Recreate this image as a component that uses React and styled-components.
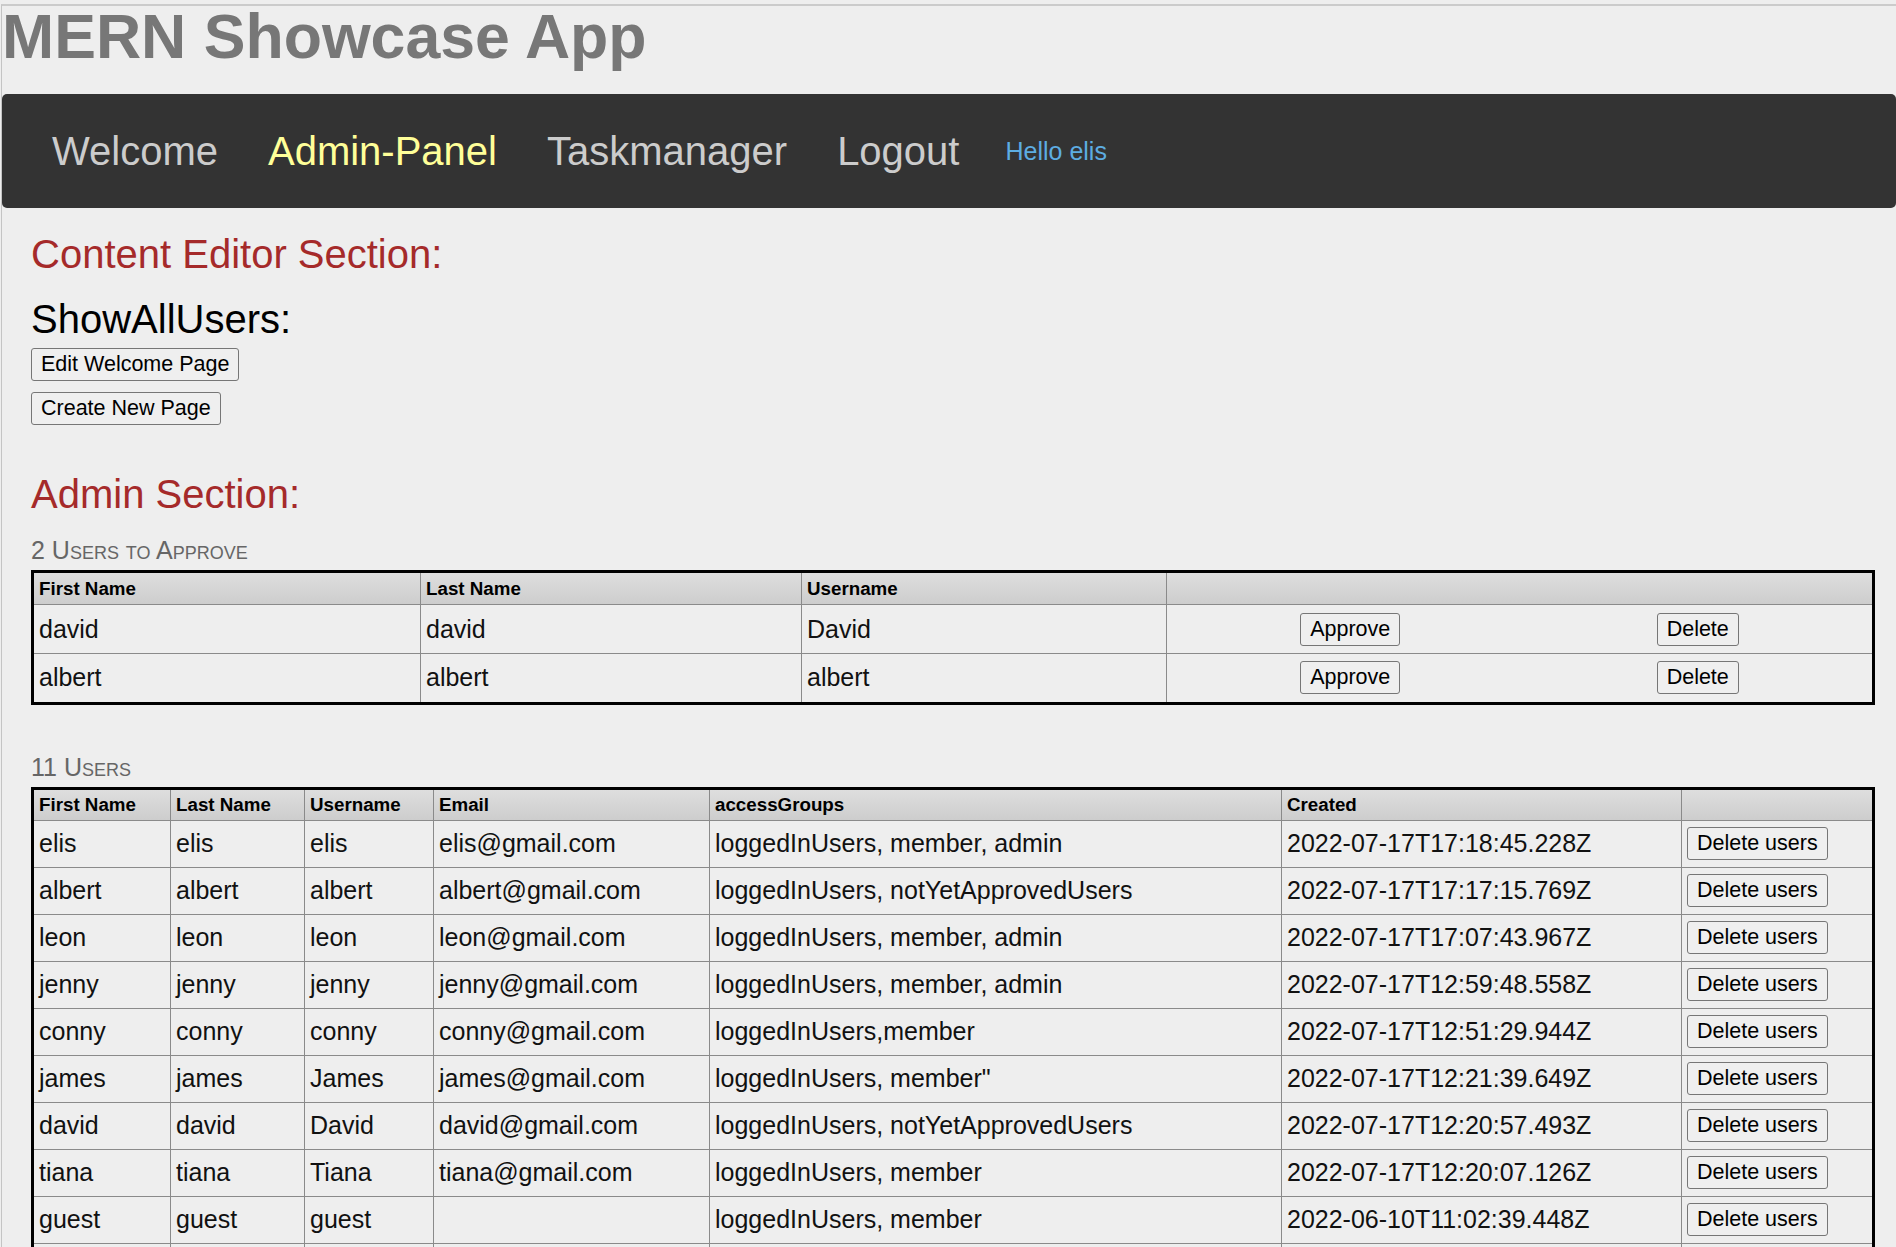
import React from "react";
import styled, { createGlobalStyle } from "styled-components";

const GlobalStyle = createGlobalStyle`
  * {
    box-sizing: border-box;
  }
  html,
  body {
    margin: 0;
    background: #eeeeee;
  }
  body {
    padding: 4px 0 0 1px;
    font-family: "Liberation Sans", Arial, sans-serif;
  }
  #root {
    min-height: calc(100vh - 4px);
    border-top: 2px solid #cbcbcb;
    border-left: 1px solid #c4c4c4;
  }
`;

const approveList = [
  { first: "david", last: "david", username: "David" },
  { first: "albert", last: "albert", username: "albert" },
];

const users = [
  ["elis", "elis", "elis", "elis@gmail.com", "loggedInUsers, member, admin", "2022-07-17T17:18:45.228Z"],
  ["albert", "albert", "albert", "albert@gmail.com", "loggedInUsers, notYetApprovedUsers", "2022-07-17T17:17:15.769Z"],
  ["leon", "leon", "leon", "leon@gmail.com", "loggedInUsers, member, admin", "2022-07-17T17:07:43.967Z"],
  ["jenny", "jenny", "jenny", "jenny@gmail.com", "loggedInUsers, member, admin", "2022-07-17T12:59:48.558Z"],
  ["conny", "conny", "conny", "conny@gmail.com", "loggedInUsers,member", "2022-07-17T12:51:29.944Z"],
  ["james", "james", "James", "james@gmail.com", 'loggedInUsers, member"', "2022-07-17T12:21:39.649Z"],
  ["david", "david", "David", "david@gmail.com", "loggedInUsers, notYetApprovedUsers", "2022-07-17T12:20:57.493Z"],
  ["tiana", "tiana", "Tiana", "tiana@gmail.com", "loggedInUsers, member", "2022-07-17T12:20:07.126Z"],
  ["guest", "guest", "guest", "", "loggedInUsers, member", "2022-06-10T11:02:39.448Z"],
  ["admin", "admin", "admin", "admin@gmail.com", "loggedInUsers, member, admin", "2022-06-10T10:58:12.311Z"],
  ["test", "test", "test", "test@gmail.com", "loggedInUsers, member", "2022-06-10T10:41:05.092Z"],
];

const userColumns = [
  { name: "First Name", w: 137 },
  { name: "Last Name", w: 134 },
  { name: "Username", w: 129 },
  { name: "Email", w: 276 },
  { name: "accessGroups", w: 572 },
  { name: "Created", w: 400 },
  { name: "", w: null },
];

const App = () => {
  return (
    <>
      <GlobalStyle />
      <Title>MERN Showcase App</Title>
      <NavBar>
        <NavLink href="#">Welcome</NavLink>
        <NavLink href="#" $active>
          Admin-Panel
        </NavLink>
        <NavLink href="#">Taskmanager</NavLink>
        <NavLink href="#">Logout</NavLink>
        <Greeting>Hello elis</Greeting>
      </NavBar>

      <Main>
        <SectionTitle $top={22.8}>Content Editor Section:</SectionTitle>
        <SubTitle>ShowAllUsers:</SubTitle>
        <ButtonStack>
          <Button>Edit Welcome Page</Button>
          <Button>Create New Page</Button>
        </ButtonStack>

        <SectionTitle $top={45.3}>Admin Section:</SectionTitle>
        <Caption $top={19.5}>2 Users to Approve</Caption>
        <Table>
          <thead>
            <tr>
              <HeadCell $w={387} $pad={4.6}>First Name</HeadCell>
              <HeadCell $w={381} $pad={4.6}>Last Name</HeadCell>
              <HeadCell $w={365} $pad={4.6}>Username</HeadCell>
              <HeadCell $pad={4.6} />
            </tr>
          </thead>
          <tbody>
            {approveList.map((u) => (
              <tr key={u.first}>
                <Cell $pad={7.3}>{u.first}</Cell>
                <Cell $pad={7.3}>{u.last}</Cell>
                <Cell $pad={7.3}>{u.username}</Cell>
                <Cell $pad={7.3}>
                  <ActionRow>
                    <Button>Approve</Button>
                    <Button>Delete</Button>
                  </ActionRow>
                </Cell>
              </tr>
            ))}
          </tbody>
        </Table>

        <Caption $top={48.5}>11 Users</Caption>
        <Table>
          <thead>
            <tr>
              {userColumns.map((c, i) => (
                <HeadCell key={i} $w={c.w} $pad={3.8}>
                  {c.name}
                </HeadCell>
              ))}
            </tr>
          </thead>
          <tbody>
            {users.map((u, i) => (
              <tr key={i}>
                {u.map((v, j) => (
                  <Cell key={j} $pad={6.5}>
                    {v}
                  </Cell>
                ))}
                <Cell $pad={6.5}>
                  <Button>Delete users</Button>
                </Cell>
              </tr>
            ))}
          </tbody>
        </Table>
      </Main>
    </>
  );
};

export default App;

const Title = styled.h1`
  margin: 0 0 27px;
  font-size: 62.6px;
  line-height: 61px;
  font-weight: 700;
  color: #777777;
`;

const NavBar = styled.nav`
  display: flex;
  align-items: center;
  gap: 50px;
  height: 114px;
  padding-left: 50px;
  background: #333333;
  border-radius: 5px;
`;

const NavLink = styled.a`
  font-size: 40px;
  color: ${(p) => (p.$active ? "#ffff99" : "#cccccc")};
  text-decoration: none;
  white-space: nowrap;
`;

const Greeting = styled.span`
  margin-left: -4px;
  font-size: 25px;
  color: #5dade2;
`;

const Main = styled.main`
  padding: 0 21px 40px 29px;
`;

const SectionTitle = styled.h2`
  margin: ${(p) => p.$top}px 0 0;
  font-size: 40px;
  line-height: 46px;
  font-weight: 400;
  color: #a52a2a;
`;

const SubTitle = styled.h3`
  margin: 19px 0 0;
  font-size: 40px;
  line-height: 46px;
  font-weight: 400;
  color: #000000;
`;

const ButtonStack = styled.div`
  display: flex;
  flex-direction: column;
  align-items: flex-start;
  gap: 11.5px;
  margin-top: 6.2px;
`;

const Button = styled.button`
  padding: 3px 9px;
  font-family: "Liberation Sans", Arial, sans-serif;
  font-size: 21.5px;
  line-height: normal;
  color: #000000;
  background: #efefef;
  border: 1px solid #767676;
  border-radius: 3px;
  cursor: pointer;
`;

const Caption = styled.h4`
  margin: ${(p) => p.$top}px 0 5px;
  font-size: 25px;
  line-height: normal;
  font-weight: 400;
  font-variant: small-caps;
  color: #666666;
`;

const Table = styled.table`
  width: 100%;
  table-layout: fixed;
  border-collapse: separate;
  border-spacing: 0;
  border: 3px solid #000000;

  tr > *:last-child {
    border-right: none;
  }
  tbody tr:last-child td {
    border-bottom: none;
  }
`;

const HeadCell = styled.th`
  width: ${(p) => (p.$w ? `${p.$w}px` : "auto")};
  padding: ${(p) => p.$pad}px 5px;
  font-size: 18.75px;
  line-height: normal;
  font-weight: 700;
  text-align: left;
  color: #000000;
  background: linear-gradient(#dedede, #cdcdcd);
  border-right: 1px solid #8a8a8a;
  border-bottom: 1px solid #8a8a8a;
`;

const Cell = styled.td`
  padding: ${(p) => p.$pad}px 5px;
  font-size: 25px;
  line-height: normal;
  color: #111111;
  white-space: nowrap;
  overflow: hidden;
  border-right: 1px solid #8a8a8a;
  border-bottom: 1px solid #8a8a8a;
`;

const ActionRow = styled.div`
  display: flex;
  justify-content: space-around;
  align-items: center;
`;
